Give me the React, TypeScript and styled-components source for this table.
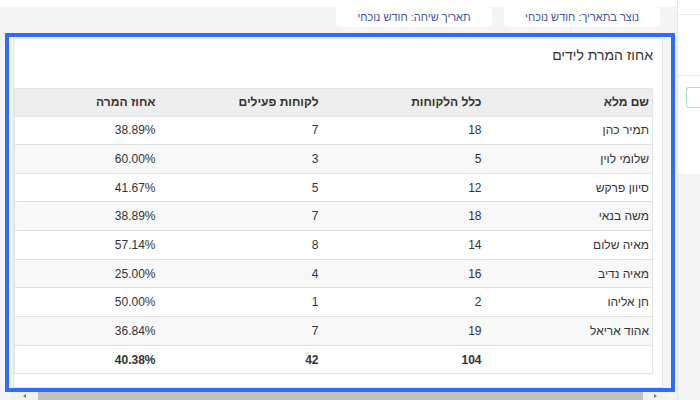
import React from "react";
import styled, { createGlobalStyle } from "styled-components";

const GlobalStyle = createGlobalStyle`
  html, body {
    margin: 0;
    padding: 0;
    width: 700px;
    height: 400px;
    overflow: hidden;
    background: #f4f4f4;
    font-family: "Liberation Sans", Arial, sans-serif;
  }
  * { box-sizing: border-box; }
`;

const Page = styled.div`
  display: grid;
  grid-template-columns: 677px 23px;
  width: 700px;
  height: 400px;
`;

const Main = styled.div`
  display: flex;
  flex-direction: column;
  background: #f4f4f4;
  min-width: 0;
`;

const TopStrip = styled.div`
  height: 7px;
  background: #fff;
`;

const FilterRow = styled.div`
  display: flex;
  direction: rtl;
  gap: 12px;
  padding-right: 17px;
  height: 20px;
`;

const Chip = styled.div`
  width: 156px;
  height: 20px;
  background: #fff;
  border-radius: 4px;
  display: flex;
  align-items: center;
  justify-content: center;
  font-size: 11px;
  color: #4453a3;
`;

const Highlight = styled.div`
  margin: 6px 2px 0 5px;
  height: 359px;
  border: 4px solid #2f6bff;
  padding: 0 8px 0 4px;
  display: flex;
  align-items: center;
`;

const Card = styled.div`
  width: 650px;
  height: 350px;
  background: #fff;
  border: 1px solid #e3e3e3;
  display: flex;
  flex-direction: column;
`;

const Title = styled.h3`
  margin: 0;
  height: 49px;
  direction: rtl;
  padding: 7px 9px 0 0;
  font-size: 14px;
  line-height: 18px;
  font-weight: normal;
  color: #333;
`;

const Table = styled.table`
  direction: rtl;
  border-collapse: collapse;
  table-layout: fixed;
  width: 638px;
  margin-left: 0;
  border: 1px solid #e6e6e6;
  font-size: 12px;
  color: #333;
`;

const HeadRow = styled.tr`
  height: 28px;
  background: #eeeeee;
`;

const Th = styled.th<{ $w: number; $pr?: number }>`
  width: ${(p) => p.$w}px;
  text-align: right;
  padding: 0 ${(p) => p.$pr ?? 8}px 0 0;
  font-weight: bold;
  color: #333;
`;

const Row = styled.tr<{ $striped?: boolean }>`
  height: 28.67px;
  background: ${(p) => (p.$striped ? "#f8f8f8" : "#fff")};
  border-top: 1px solid #e2e2e2;
`;

const Td = styled.td<{ $pr?: number; $bold?: boolean }>`
  text-align: right;
  padding: 0 ${(p) => p.$pr ?? 8}px 0 0;
  font-weight: ${(p) => (p.$bold ? "bold" : "normal")};
  color: #333;
`;

const ScrollBar = styled.div`
  margin: 0 9px 0 10px;
  height: 8px;
  background: #f1f1f1;
  display: flex;
  align-items: center;
`;

const Arrow = styled.div<{ $dir: "left" | "right" }>`
  width: 28px;
  height: 8px;
  display: flex;
  align-items: center;
  justify-content: center;
  &::before {
    content: "";
    border-top: 2px solid transparent;
    border-bottom: 2px solid transparent;
    ${(p) =>
      p.$dir === "left"
        ? "border-right: 3px solid #777;"
        : "border-left: 3px solid #777;"}
  }
`;

const Thumb = styled.div`
  flex: 1;
  height: 8px;
  background: #c1c1c1;
`;

const ArrowRight = styled(Arrow)`
  width: 25px;
`;

const Side = styled.div`
  background: #fff;
  border-left: 1px solid #e6e6e6;
  display: flex;
  flex-direction: column;
`;

const SideTop = styled.div`
  height: 15px;
  border-bottom: 1px solid #e8e8e8;
`;

const SideBlock = styled.div`
  height: 61px;
  border-bottom: 1px solid #e8e8e8;
`;

const SideForm = styled.div`
  height: 98px;
  padding: 11px 0 0 8px;
`;

const GreenInput = styled.div`
  height: 21px;
  border: 1px solid #a6e3c8;
  border-right: none;
  border-radius: 3px 0 0 3px;
`;

const SideRest = styled.div`
  flex: 1;
  background: #f4f4f4;
`;

const rows = [
  { name: "תמיר כהן", total: 18, active: 7, pct: "38.89%" },
  { name: "שלומי לוין", total: 5, active: 3, pct: "60.00%" },
  { name: "סיוון פרקש", total: 12, active: 5, pct: "41.67%" },
  { name: "משה בנאי", total: 18, active: 7, pct: "38.89%" },
  { name: "מאיה שלום", total: 14, active: 8, pct: "57.14%" },
  { name: "מאיה נדיב", total: 16, active: 4, pct: "25.00%" },
  { name: "חן אליהו", total: 2, active: 1, pct: "50.00%" },
  { name: "אהוד אריאל", total: 19, active: 7, pct: "36.84%" },
];

export default function App() {
  return (
    <>
      <GlobalStyle />
      <Page>
        <Main>
          <TopStrip />
          <FilterRow>
            <Chip>נוצר בתאריך: חודש נוכחי</Chip>
            <Chip>תאריך שיחה: חודש נוכחי</Chip>
          </FilterRow>
          <Highlight>
            <Card>
              <Title>אחוז המרת לידים</Title>
              <Table>
                <thead>
                  <HeadRow>
                    <Th $w={163} $pr={3}>שם מלא</Th>
                    <Th $w={163}>כלל הלקוחות</Th>
                    <Th $w={163}>לקוחות פעילים</Th>
                    <Th $w={149}>אחוז המרה</Th>
                  </HeadRow>
                </thead>
                <tbody>
                  {rows.map((r, i) => (
                    <Row key={i} $striped={i % 2 === 1}>
                      <Td $pr={3}>{r.name}</Td>
                      <Td>{r.total}</Td>
                      <Td>{r.active}</Td>
                      <Td>{r.pct}</Td>
                    </Row>
                  ))}
                  <Row>
                    <Td $pr={3} $bold></Td>
                    <Td $bold>104</Td>
                    <Td $bold>42</Td>
                    <Td $bold>40.38%</Td>
                  </Row>
                </tbody>
              </Table>
            </Card>
          </Highlight>
          <ScrollBar>
            <Arrow $dir="left" />
            <Thumb />
            <ArrowRight $dir="right" />
          </ScrollBar>
        </Main>
        <Side>
          <SideTop />
          <SideBlock />
          <SideForm>
            <GreenInput />
          </SideForm>
          <SideRest />
        </Side>
      </Page>
    </>
  );
}
